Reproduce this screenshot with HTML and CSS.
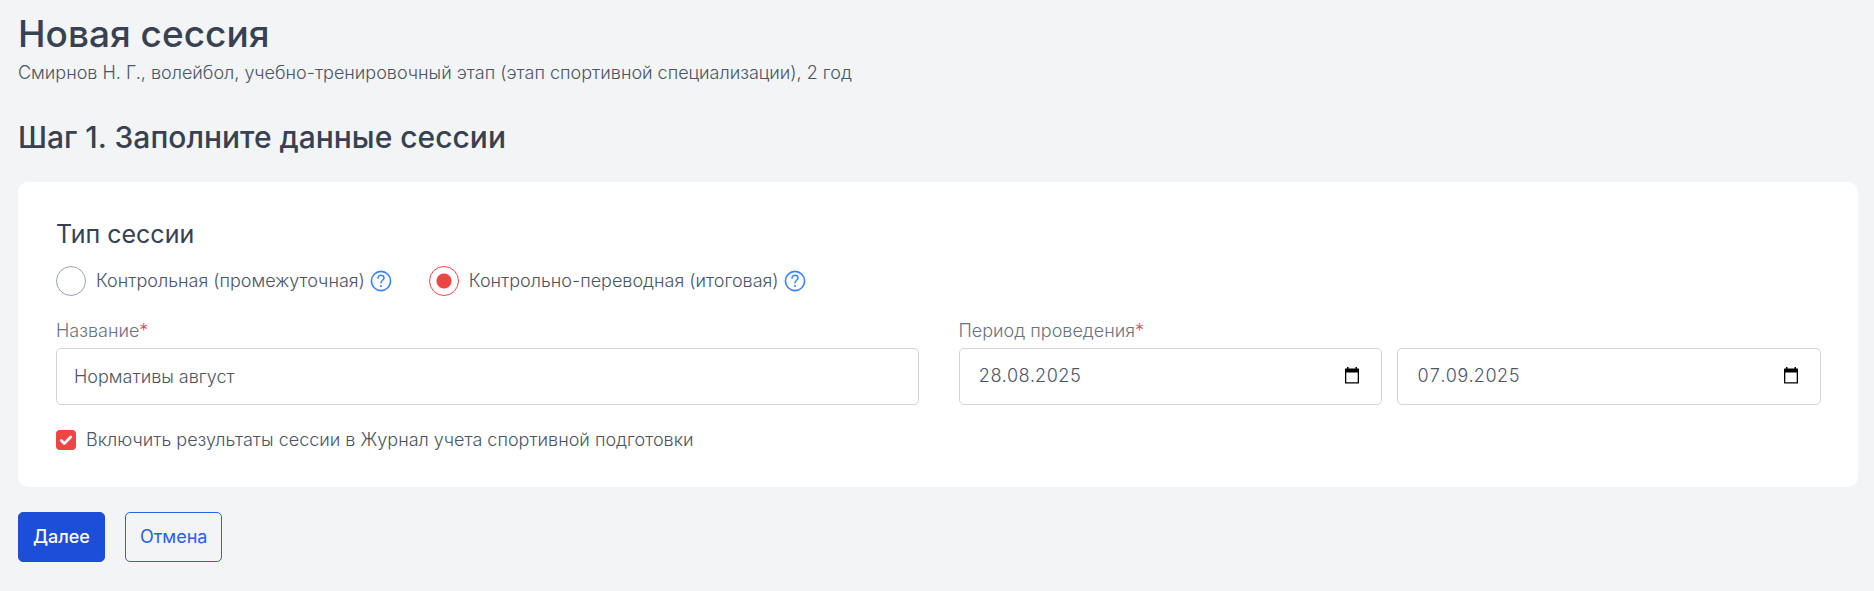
FILE: index.html
```html
<!DOCTYPE html>
<html lang="ru">
<head>
<meta charset="utf-8">
<meta name="viewport" content="width=device-width, initial-scale=1">
<title>Новая сессия</title>
<link rel="stylesheet" href="styles.css">
</head>
<body>
<main class="page">
  <header class="page-header">
    <h1 class="page-title">Новая сессия</h1>
    <p class="page-subtitle">Смирнов Н. Г., волейбол, учебно-тренировочный этап (этап спортивной специализации), 2 год</p>
  </header>
  <h2 class="step-title">Шаг 1. Заполните данные сессии</h2>
  <form class="session-form">
    <div class="card">
      <fieldset class="type-group">
        <legend class="section-title">Тип сессии</legend>
        <div class="options">
          <div class="option">
            <input class="radio" type="radio" name="type" id="type-control">
            <label for="type-control">Контрольная (промежуточная)</label>
            <button class="help" type="button" aria-label="Справка">
              <svg viewBox="0 0 22 22" width="22" height="22" fill="none" stroke="currentColor"><circle cx="11" cy="11" r="9.6" stroke-width="1.6"/><path d="M8 8.200C8 6.400 9.300 5.200 11 5.200s3 1.100 3 2.700c0 2.300-3 2.500-3 5.100" stroke-width="1.500" stroke-linecap="round"/><circle cx="11" cy="16" r="1" fill="currentColor" stroke="none"/></svg>
            </button>
          </div>
          <div class="option">
            <input class="radio" type="radio" name="type" id="type-final" checked>
            <label for="type-final">Контрольно-переводная (итоговая)</label>
            <button class="help" type="button" aria-label="Справка">
              <svg viewBox="0 0 22 22" width="22" height="22" fill="none" stroke="currentColor"><circle cx="11" cy="11" r="9.6" stroke-width="1.6"/><path d="M8 8.200C8 6.400 9.300 5.200 11 5.200s3 1.100 3 2.700c0 2.300-3 2.500-3 5.100" stroke-width="1.500" stroke-linecap="round"/><circle cx="11" cy="16" r="1" fill="currentColor" stroke="none"/></svg>
            </button>
          </div>
        </div>
      </fieldset>
      <div class="fields">
        <div class="field">
          <label class="field-label" for="name">Название<span class="required">*</span></label>
          <div class="control"><input class="input" id="name" type="text" value="Нормативы август"></div>
        </div>
        <div class="field">
          <label class="field-label" for="date-from">Период проведения<span class="required">*</span></label>
          <div class="period">
            <div class="control control-date">
              <input class="input" id="date-from" type="text" inputmode="numeric" value="28.08.2025">
              <button class="calendar" type="button" aria-label="Выбрать дату начала">
                <svg viewBox="0 0 16 18" width="16" height="18"><path d="M3 0h1.500v1.500h7V0H13v1.500h1.500q.5 0 .5.500v14q0 .5-.5.500h-13Q1 16.500 1 16V2q0-.5.500-.5H3zM2.300 5.500v9.700h11.400V5.500z" fill="currentColor" fill-rule="evenodd"/></svg>
              </button>
            </div>
            <div class="control control-date">
              <input class="input" id="date-to" type="text" inputmode="numeric" value="07.09.2025" aria-label="Дата окончания">
              <button class="calendar" type="button" aria-label="Выбрать дату окончания">
                <svg viewBox="0 0 16 18" width="16" height="18"><path d="M3 0h1.500v1.500h7V0H13v1.500h1.500q.5 0 .5.500v14q0 .5-.5.500h-13Q1 16.500 1 16V2q0-.5.500-.5H3zM2.300 5.500v9.700h11.400V5.500z" fill="currentColor" fill-rule="evenodd"/></svg>
              </button>
            </div>
          </div>
        </div>
      </div>
      <div class="journal">
        <span class="check">
          <input class="checkbox" type="checkbox" id="journal" checked>
          <svg class="check-mark" viewBox="0 0 20 20" width="20" height="20" fill="none" stroke="#fff" stroke-width="2.8" stroke-linecap="round" stroke-linejoin="round"><path d="M5.300 10.600l3 3 6.400-6.600"/></svg>
        </span>
        <label for="journal">Включить результаты сессии в Журнал учета спортивной подготовки</label>
      </div>
    </div>
    <div class="actions">
      <button class="button button-primary" type="submit">Далее</button>
      <button class="button button-outline" type="button">Отмена</button>
    </div>
  </form>
</main>
</body>
</html>
```
FILE: styles.css
```css
* {
  box-sizing: border-box;
}

body {
  margin: 0;
  background: #f3f4f6;
  color: #4b5563;
  font-family: Inter, "Open Sans", sans-serif;
  font-size: 18px;
  font-weight: 300;
  line-height: 28px;
}

button,
input {
  margin: 0;
  font: inherit;
  color: inherit;
}

.page {
  padding: 8px 16px 28px 18px;
}

.page-title,
.step-title,
.page-subtitle {
  margin: 0;
}

.page-title {
  color: #374151;
  font-size: 37px;
  font-weight: 500;
  line-height: 51px;
}

.step-title {
  margin: 30px 0 25px;
  color: #374151;
  font-size: 30px;
  font-weight: 500;
  line-height: 40px;
}

.card {
  padding: 36px 37px 33px 38px;
  border-radius: 10px;
  background: #fff;
}

.type-group {
  min-width: 0;
  margin: 0;
  padding: 0;
  border: 0;
}

.section-title {
  padding: 0;
  color: #374151;
  font-size: 25px;
  font-weight: 400;
  line-height: 32px;
}

.options {
  display: flex;
  flex-wrap: wrap;
  gap: 16px 37px;
  padding-top: 16px;
}

.option {
  display: flex;
  align-items: center;
}

.radio {
  appearance: none;
  width: 30px;
  height: 30px;
  margin-right: 10px;
  border: 1px solid #94a3b8;
  border-radius: 50%;
  background: #fff;
}

.radio:checked {
  border-color: #ef4444;
  background: radial-gradient(circle, #ef4444 7px, #fff 8px);
}

.help {
  display: flex;
  margin-left: 5px;
  padding: 0;
  border: 0;
  background: none;
  color: #3b82f6;
}

.fields {
  display: grid;
  grid-template-columns: 1fr 1fr;
  gap: 40px;
  margin-top: 21px;
}

.field-label {
  display: block;
  margin-bottom: 3px;
  color: #6b7280;
}

.required {
  color: #ef4444;
}

.period {
  display: grid;
  grid-template-columns: 1fr 1fr;
  gap: 15px;
}

.control {
  display: flex;
  align-items: center;
  padding: 14px 18px 13px 17px;
  border: 1px solid #d1d5db;
  border-radius: 5px;
}

.control-date {
  padding: 13px 21px 14px 19px;
  font-variant-numeric: tabular-nums;
}

.input {
  flex: 1;
  min-width: 0;
  width: 100%;
  height: 28px;
  padding: 0;
  border: 0;
  outline: 0;
  background: none;
}

.calendar {
  display: flex;
  padding: 0;
  border: 0;
  background: none;
  color: #000;
}

.journal {
  display: flex;
  align-items: center;
  gap: 10px;
  margin-top: 21px;
}

.check {
  position: relative;
  display: flex;
}

.checkbox {
  appearance: none;
  width: 20px;
  height: 20px;
  border-radius: 4px;
  background: #ef4444;
}

.check-mark {
  position: absolute;
  inset: 0;
  pointer-events: none;
}

.actions {
  display: flex;
  gap: 20px;
  margin-top: 25px;
}

.button {
  padding: 10px 14px;
  border: 1px solid #2563eb;
  border-radius: 5px;
  font-weight: 400;
}

.button-primary {
  border-color: #1d4ed8;
  background: #1d4ed8;
  color: #fff;
  font-weight: 500;
}

.button-outline {
  background: transparent;
  color: #2563eb;
}
```
